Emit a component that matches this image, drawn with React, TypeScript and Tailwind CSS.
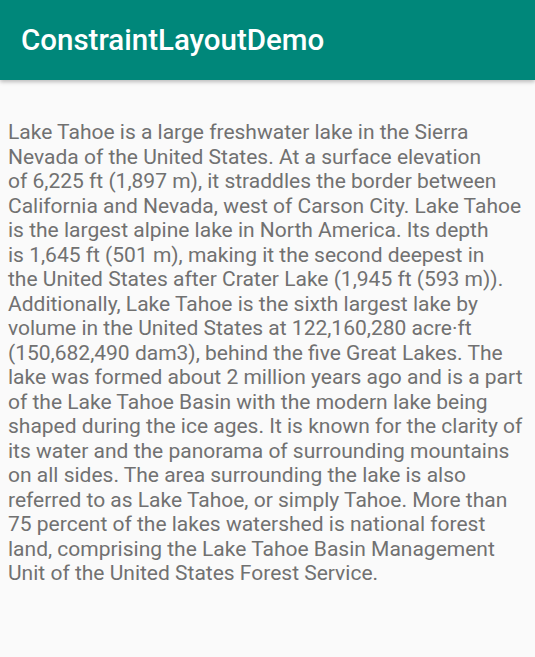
import React from 'react';

const lines = [
  'Lake Tahoe is a large freshwater lake in the Sierra',
  'Nevada of the United States. At a surface elevation',
  'of 6,225 ft (1,897 m), it straddles the border between',
  'California and Nevada, west of Carson City. Lake Tahoe',
  'is the largest alpine lake in North America. Its depth',
  'is 1,645 ft (501 m), making it the second deepest in',
  'the United States after Crater Lake (1,945 ft (593 m)).',
  'Additionally, Lake Tahoe is the sixth largest lake by',
  'volume in the United States at 122,160,280 acre·ft',
  '(150,682,490 dam3), behind the five Great Lakes. The',
  'lake was formed about 2 million years ago and is a part',
  'of the Lake Tahoe Basin with the modern lake being',
  'shaped during the ice ages. It is known for the clarity of',
  'its water and the panorama of surrounding mountains',
  'on all sides. The area surrounding the lake is also',
  'referred to as Lake Tahoe, or simply Tahoe. More than',
  '75 percent of the lakes watershed is national forest',
  'land, comprising the Lake Tahoe Basin Management',
  'Unit of the United States Forest Service.',
];

export default function App() {
  return (
    <div className="w-[535px] h-[657px] bg-[#fafafa] font-['Roboto',sans-serif] overflow-hidden">
      <header className="h-[80px] bg-[#00877a] flex items-center px-[21px] shadow-[0_2px_4px_rgba(0,0,0,0.25)]">
        <h1 className="text-white text-[29.5px] font-medium">ConstraintLayoutDemo</h1>
      </header>
      <p className="pt-[40px] px-[8px] text-[21px] leading-[24.5px] text-[#717171] whitespace-nowrap">
        {lines.map((l, i) => (
          <React.Fragment key={i}>
            {l}
            {i < lines.length - 1 && <br />}
          </React.Fragment>
        ))}
      </p>
    </div>
  );
}
